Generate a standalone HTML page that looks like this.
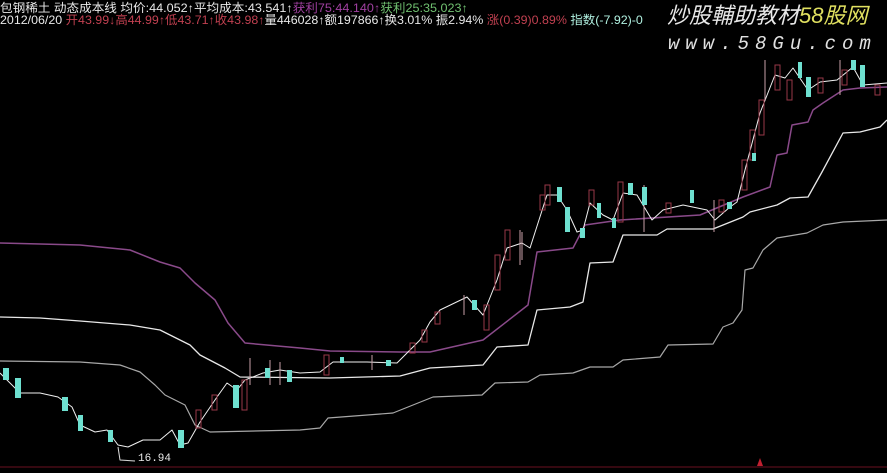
<!DOCTYPE html>
<html><head><meta charset="utf-8"><style>
html,body{margin:0;padding:0;background:#000;}
#c{position:relative;width:887px;height:473px;overflow:hidden;background:#000;font-family:"Liberation Sans","Noto Sans CJK SC",sans-serif;}
.r{position:absolute;left:0;font-size:12px;line-height:12px;white-space:nowrap;transform-origin:0 0;}
</style></head><body><div id="c">
<svg width="887" height="473" style="position:absolute;left:0;top:0">
<g fill="none" stroke-linejoin="round">
<polyline stroke="#8a4a8a" stroke-width="1.5" points="0,243 80,245 100,247 130,250 160,262 180,268 195,283 215,300 228,323 245,343 300,348 330,351 400,352 430,352 483,340 528,305 537,252 573,248 585,225 620,220 700,215 743,197 770,187 777,155 787,153 792,125 808,122 813,110 823,103 843,90 860,88 887,87"/>
<polyline stroke="#e8e8e8" stroke-width="1.3" points="0,317 40,318 80,321 130,325 160,330 190,345 200,355 225,368 240,377 330,378 400,376 430,368 483,365 497,347 528,345 537,310 570,307 583,302 590,263 613,262 623,235 657,235 667,229 713,229 743,217 750,212 777,205 790,198 808,197 822,172 843,133 860,132 880,127 887,120"/>
<polyline stroke="#a8a8a8" stroke-width="1.2" points="0,361 80,362 120,365 140,372 155,385 165,395 185,405 195,425 210,432 300,430 320,428 328,418 393,413 433,397 482,395 495,383 528,382 540,375 573,373 590,367 613,367 623,360 660,357 668,345 713,344 723,327 733,323 742,310 745,270 753,268 763,250 777,238 807,233 823,225 843,222 887,220"/>
<polyline stroke="#f0f0f0" stroke-width="1" points="0,373 20,393 40,393 58,397 72,407 80,425 95,432 107,430 118,445 128,447 143,440 160,440 172,430 180,445 188,443 200,422 217,397 227,383 237,390 245,380 263,373 280,370 300,373 320,372 333,362 367,362 397,363 410,350 420,340 430,322 440,310 467,297 483,315 497,280 507,248 522,243 530,248 547,195 557,195 567,210 577,232 583,230 590,203 603,215 613,220 623,193 637,195 652,220 663,210 683,205 707,210 715,220 730,207 737,202 745,170 760,113 775,75 785,78 793,68 808,90 820,82 837,80 853,67 863,85 887,83"/>
<polyline stroke="#ddd" stroke-width="1" points="118,447 120,460 135,461"/>
</g>
<g fill="none" stroke="#983848" stroke-width="1">
<rect x="196" y="410" width="5" height="18"/><rect x="212" y="395" width="5" height="15"/><rect x="242" y="380" width="5" height="30"/>
<rect x="324" y="355" width="5" height="20"/><rect x="410" y="343" width="5" height="10"/><rect x="422" y="330" width="5" height="12"/>
<rect x="435" y="312" width="5" height="12"/><rect x="484" y="305" width="5" height="25"/><rect x="495" y="255" width="5" height="35"/>
<rect x="505" y="230" width="5" height="30"/><rect x="540" y="195" width="5" height="15"/><rect x="545" y="185" width="5" height="20"/>
<rect x="589" y="190" width="5" height="15"/><rect x="618" y="182" width="5" height="40"/><rect x="666" y="203" width="5" height="10"/>
<rect x="719" y="200" width="5" height="12"/><rect x="742" y="160" width="5" height="30"/><rect x="750" y="130" width="5" height="30"/>
<rect x="759" y="100" width="5" height="35"/><rect x="775" y="65" width="5" height="25"/><rect x="787" y="80" width="5" height="20"/>
<rect x="818" y="78" width="5" height="15"/><rect x="842" y="70" width="5" height="15"/><rect x="875" y="85" width="5" height="10"/>
</g>
<g stroke="#c8a0a8" stroke-width="1">
<line x1="250" y1="358" x2="250" y2="385"/><line x1="270" y1="360" x2="270" y2="385"/><line x1="280" y1="362" x2="280" y2="385"/>
<line x1="520" y1="230" x2="520" y2="265"/><line x1="522" y1="232" x2="522" y2="260"/><line x1="644" y1="185" x2="644" y2="232"/>
<line x1="714" y1="200" x2="714" y2="232"/><line x1="765" y1="60" x2="765" y2="100"/><line x1="840" y1="60" x2="840" y2="95"/>
<line x1="464" y1="295" x2="464" y2="315"/><line x1="372" y1="355" x2="372" y2="370"/>
</g>
<g fill="#6ee0d0">
<rect x="3" y="368" width="6" height="12"/><rect x="15" y="378" width="6" height="20"/><rect x="62" y="397" width="6" height="14"/>
<rect x="78" y="415" width="5" height="16"/><rect x="108" y="430" width="5" height="12"/><rect x="178" y="430" width="6" height="18"/>
<rect x="233" y="385" width="6" height="23"/><rect x="265" y="368" width="5" height="10"/><rect x="287" y="370" width="5" height="12"/>
<rect x="340" y="357" width="4" height="6"/><rect x="386" y="360" width="5" height="6"/>
<rect x="472" y="300" width="5" height="10"/><rect x="557" y="187" width="5" height="15"/><rect x="565" y="207" width="5" height="25"/>
<rect x="580" y="228" width="5" height="10"/><rect x="597" y="203" width="4" height="15"/><rect x="612" y="218" width="4" height="10"/>
<rect x="628" y="183" width="5" height="12"/><rect x="642" y="187" width="5" height="18"/><rect x="690" y="190" width="4" height="13"/>
<rect x="727" y="202" width="5" height="7"/><rect x="752" y="153" width="4" height="8"/><rect x="798" y="62" width="4" height="16"/>
<rect x="806" y="77" width="5" height="20"/><rect x="851" y="60" width="5" height="10"/><rect x="860" y="65" width="5" height="22"/>
</g>
<line x1="0" y1="467" x2="887" y2="467" stroke="#6a1020" stroke-width="1"/>
<path d="M760 458 l3 8 l-6 0z" fill="#c02030"/>
</svg>
<div class="r" style="top:2px;color:#e8e8e8;transform:scaleX(1.05)">包钢稀土 动态成本线 均价:44.052↑平均成本:43.541↑<span style="color:#a040a0">获利75:44.140↑</span><span style="color:#70c070">获利25:35.023↑</span></div>
<div class="r" style="top:14px;color:#e8e8e8;transform:scaleX(1.035)">2012/06/20 <span style="color:#c04050">开43.99↓高44.99↑低43.71↑收43.98↑</span>量446028↑额197866↑换3.01% 振2.94% <span style="color:#c04050">涨(0.39)0.89%</span> <span style="color:#b0f0e0">指数(-7.92)-0</span></div>
<div style="position:absolute;left:138px;top:453px;color:#e8e8e8;font-size:11px;font-family:'Liberation Mono',monospace">16.94</div>
<div style="position:absolute;left:667px;top:3px;font-size:22px;line-height:26px;font-style:italic;color:#e8e8e8;white-space:nowrap">炒股輔助教材<span style="color:#e0e060">58股网</span></div>
<div style="position:absolute;left:668px;top:34px;font-size:19px;line-height:20px;font-style:italic;color:#e0e0e0;letter-spacing:6px;white-space:nowrap;font-family:'Liberation Mono',monospace">www.58Gu.com</div>
</div></body></html>
